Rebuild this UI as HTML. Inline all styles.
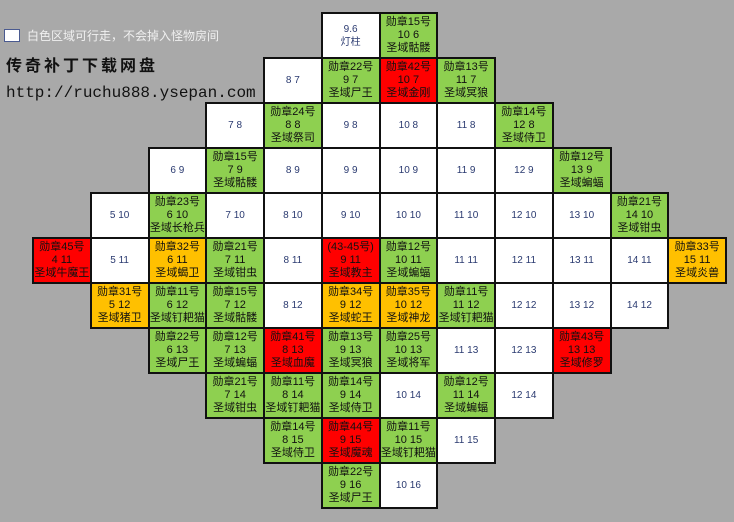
<!DOCTYPE html>
<html><head><meta charset="utf-8"><style>
body{margin:0;width:734px;height:522px;background:#a9a9a9;position:relative;overflow:hidden;font-family:"Liberation Sans","Noto Sans CJK SC",sans-serif}
.c{position:absolute;box-sizing:border-box;width:59.75px;height:47px;border:2px solid #111;display:flex;flex-direction:column;justify-content:center;align-items:center;font-size:11px;line-height:13px;color:#111;text-align:center;white-space:nowrap}
.w{background:#fff;color:#2a3a70;font-size:10px}
.g{background:#8ed050}
.o{background:#ffc000}
.r{background:#ff0000}
</style></head><body>
<div style="position:absolute;left:4px;top:29px;width:14px;height:11px;background:#fff;border:1px solid #4a5a90"></div>
<div style="position:absolute;left:27px;top:27px;font-size:12px;color:#f0f0f0">白色区域可行走，不会掉入怪物房间</div>
<div style="position:absolute;left:6px;top:52px;font-size:16px;letter-spacing:3px;color:#111;font-weight:bold">传奇补丁下载网盘</div>
<div style="position:absolute;left:6px;top:84px;font-size:16px;letter-spacing:0px;color:#111;font-family:'Liberation Mono',monospace">http://ruchu888.ysepan.com</div>
<div id="g"></div>
<script>
var d=[
[9,6,'w','9.6|灯柱'],[10,6,'g','勋章15号|10 6|圣域骷髅'],
[8,7,'w','8 7'],[9,7,'g','勋章22号|9 7|圣域尸王'],[10,7,'r','勋章42号|10 7|圣域金刚'],[11,7,'g','勋章13号|11 7|圣域冥狼'],
[7,8,'w','7 8'],[8,8,'g','勋章24号|8 8|圣域祭司'],[9,8,'w','9 8'],[10,8,'w','10 8'],[11,8,'w','11 8'],[12,8,'g','勋章14号|12 8|圣域侍卫'],
[6,9,'w','6 9'],[7,9,'g','勋章15号|7 9|圣域骷髅'],[8,9,'w','8 9'],[9,9,'w','9 9'],[10,9,'w','10 9'],[11,9,'w','11 9'],[12,9,'w','12 9'],[13,9,'g','勋章12号|13 9|圣域蝙蝠'],
[5,10,'w','5 10'],[6,10,'g','勋章23号|6 10|圣域长枪兵'],[7,10,'w','7 10'],[8,10,'w','8 10'],[9,10,'w','9 10'],[10,10,'w','10 10'],[11,10,'w','11 10'],[12,10,'w','12 10'],[13,10,'w','13 10'],[14,10,'g','勋章21号|14 10|圣域钳虫'],
[4,11,'r','勋章45号|4 11|圣域牛魔王'],[5,11,'w','5 11'],[6,11,'o','勋章32号|6 11|圣域蝎卫'],[7,11,'g','勋章21号|7 11|圣域钳虫'],[8,11,'w','8 11'],[9,11,'r','(43-45号)|9 11|圣域教主'],[10,11,'g','勋章12号|10 11|圣域蝙蝠'],[11,11,'w','11 11'],[12,11,'w','12 11'],[13,11,'w','13 11'],[14,11,'w','14 11'],[15,11,'o','勋章33号|15 11|圣域炎兽'],
[5,12,'o','勋章31号|5 12|圣域猪卫'],[6,12,'g','勋章11号|6 12|圣域钉耙猫'],[7,12,'g','勋章15号|7 12|圣域骷髅'],[8,12,'w','8 12'],[9,12,'o','勋章34号|9 12|圣域蛇王'],[10,12,'o','勋章35号|10 12|圣域神龙'],[11,12,'g','勋章11号|11 12|圣域钉耙猫'],[12,12,'w','12 12'],[13,12,'w','13 12'],[14,12,'w','14 12'],
[6,13,'g','勋章22号|6 13|圣域尸王'],[7,13,'g','勋章12号|7 13|圣域蝙蝠'],[8,13,'r','勋章41号|8 13|圣域血魔'],[9,13,'g','勋章13号|9 13|圣域冥狼'],[10,13,'g','勋章25号|10 13|圣域将军'],[11,13,'w','11 13'],[12,13,'w','12 13'],[13,13,'r','勋章43号|13 13|圣域修罗'],
[7,14,'g','勋章21号|7 14|圣域钳虫'],[8,14,'g','勋章11号|8 14|圣域钉耙猫'],[9,14,'g','勋章14号|9 14|圣域侍卫'],[10,14,'w','10 14'],[11,14,'g','勋章12号|11 14|圣域蝙蝠'],[12,14,'w','12 14'],
[8,15,'g','勋章14号|8 15|圣域侍卫'],[9,15,'r','勋章44号|9 15|圣域魔魂'],[10,15,'g','勋章11号|10 15|圣域钉耙猫'],[11,15,'w','11 15'],
[9,16,'g','勋章22号|9 16|圣域尸王'],[10,16,'w','10 16']];
var h='';d.forEach(function(e){h+='<div class="c '+e[2]+'" style="left:'+(32+(e[0]-4)*57.75)+'px;top:'+(12+(e[1]-6)*45)+'px">'+e[3].split('|').map(function(t){return '<div>'+t+'</div>'}).join('')+'</div>'});
document.getElementById('g').innerHTML=h;
</script>
</body></html>
